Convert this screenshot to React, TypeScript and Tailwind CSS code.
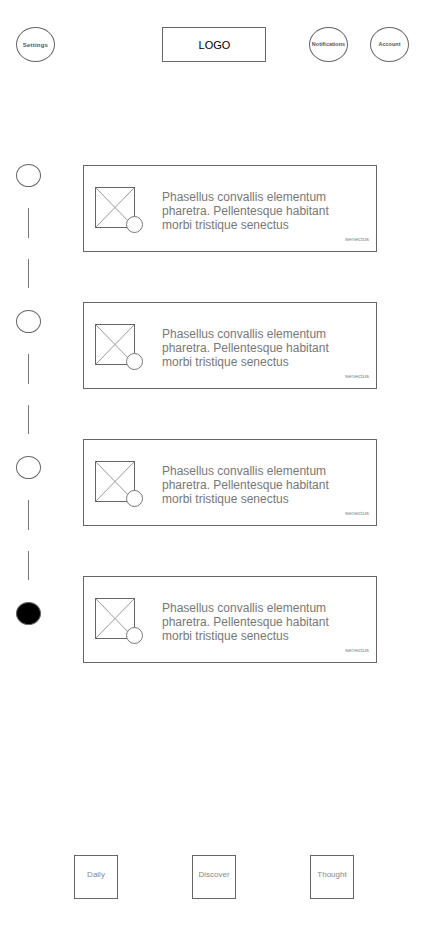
const cards = [0, 1, 2, 3]

function Thumb() {
  return (
    <div className="relative w-[40px] h-[41px]">
      <svg className="w-[40px] h-[41px]" viewBox="0 0 40 41" fill="none">
        <path d="M1 1L39 40M39 1L1 40" stroke="#999" strokeWidth="1" />
        <rect x="0.5" y="0.5" width="39" height="40" stroke="#666" strokeWidth="1" />
      </svg>
      <div className="absolute left-[31px] top-[29px] w-[17px] h-[17px] rounded-full border border-[#777] bg-white" />
    </div>
  )
}

function HeaderCircle({ label, wide }: { label: string; wide?: boolean }) {
  return (
    <div
      className={
        wide
          ? "w-[39px] h-[35px] pt-[1px] rounded-[50%] border border-[#666] flex items-center justify-center text-[6px] font-bold tracking-[0.2px] text-[#555] whitespace-nowrap"
          : "w-[39px] h-[35px] rounded-[50%] border border-[#666] flex items-center justify-center text-[5.5px] font-bold text-[#555] whitespace-nowrap"
      }
    >
      {label}
    </div>
  )
}

function Dot({ filled }: { filled?: boolean }) {
  return (
    <div
      className={
        filled
          ? "w-[25px] h-[23px] rounded-[50%] border border-[#666] bg-black"
          : "w-[25px] h-[23px] rounded-[50%] border border-[#666] bg-white"
      }
    />
  )
}

export default function App() {
  return (
    <div className="w-[428px] h-[926px] bg-white font-['Liberation_Sans',Arial,sans-serif] flex flex-col">
      {/* Header */}
      <div className="flex items-start pt-[27px] pl-[16px]">
        <HeaderCircle label="Settings" wide />
        <div className="ml-[107px] w-[104px] h-[35px] border border-[#666] flex items-center justify-center pt-[1px] pl-[1px] text-[11px] text-black">
          LOGO
        </div>
        <div className="ml-[43px]">
          <HeaderCircle label="Notifications" />
        </div>
        <div className="ml-[22px]">
          <HeaderCircle label="Account" />
        </div>
      </div>

      <div className="flex items-start pt-[102px] pl-[16px]">
        {/* Timeline */}
        <div className="w-[67px] flex flex-col items-start">
          {[0, 1, 2].map((i) => (
            <div key={i} className="flex flex-col">
              <Dot />
              <div className="ml-[12px] mt-[21px] w-px h-[30px] bg-[#777]" />
              <div className="ml-[12px] mt-[21px] mb-[22px] w-px h-[29px] bg-[#777]" />
            </div>
          ))}
          <Dot filled />
        </div>

        {/* Cards */}
        <div className="flex flex-col gap-[50px] pt-[1px]">
          {cards.map((card) => (
            <div key={card} className="relative w-[294px] h-[87px] border border-[#666] flex items-start pl-[11px] pt-[21px]">
              <Thumb />
              <p className="ml-[27px] mt-[3px] w-[190px] text-[12px] leading-[14px] text-[#777]">
                Phasellus convallis elementum pharetra. Pellentesque habitant morbi tristique senectus
              </p>
              <span className="absolute right-[7px] bottom-[8px] text-[6px] leading-[7px] text-[#888]">senectus</span>
            </div>
          ))}
        </div>
      </div>

      {/* Bottom nav */}
      <div className="mt-auto mb-[27px] flex pl-[74px] gap-[74px]">
        {["Daily", "Discover", "Thought"].map((label) => (
          <div
            key={label}
            className="w-[44px] h-[44px] border border-[#666] flex items-center justify-center text-[8px] text-[#888] pb-[5px]"
          >
            {label}
          </div>
        ))}
      </div>
    </div>
  )
}
